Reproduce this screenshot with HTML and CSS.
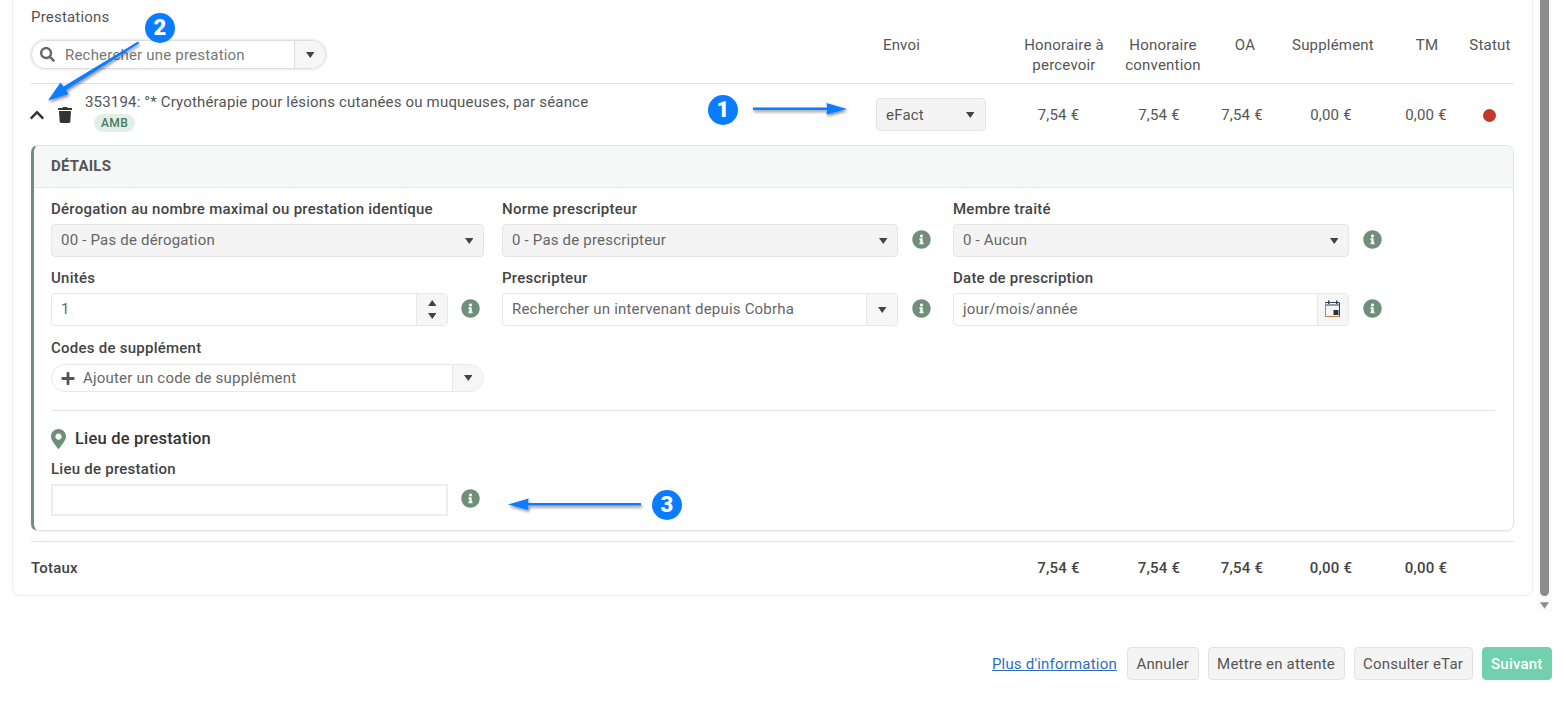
FILE: index.html
```html
<!DOCTYPE html>
<html lang="fr">
<head>
  <meta charset="UTF-8">
  <meta name="viewport" content="width=device-width, initial-scale=1.0">
  <title>Prestations</title>
  <link rel="stylesheet" href="styles.css">
</head>
<body>
  <svg class="icon-defs" width="0" height="0">
    <symbol id="i-search" viewBox="0 0 512 512"><path d="M505 442.7L405.3 343c-4.5-4.5-10.6-7-17-7H372c27.6-35.3 44-79.7 44-128C416 93.1 322.9 0 208 0S0 93.1 0 208s93.1 208 208 208c48.3 0 92.7-16.4 128-44v16.3c0 6.4 2.5 12.5 7 17l99.7 99.7c9.4 9.4 24.6 9.4 33.9 0l28.3-28.3c9.4-9.4 9.4-24.6.1-34zM208 336c-70.7 0-128-57.2-128-128 0-70.7 57.2-128 128-128 70.7 0 128 57.2 128 128 0 70.7-57.2 128-128 128z"/></symbol>
    <symbol id="i-trash" viewBox="0 0 448 512"><path d="M432 32H312l-9.4-18.7A24 24 0 0 0 281.1 0H166.8a23.72 23.72 0 0 0-21.4 13.3L136 32H16A16 16 0 0 0 0 48v32a16 16 0 0 0 16 16h416a16 16 0 0 0 16-16V48a16 16 0 0 0-16-16zM53.2 467a48 48 0 0 0 47.9 45h245.8a48 48 0 0 0 47.9-45L416 128H32z"/></symbol>
    <symbol id="i-chevron" viewBox="0 0 448 512"><path d="M240.971 130.524l194.343 194.343c9.373 9.373 9.373 24.569 0 33.941l-22.667 22.667c-9.357 9.357-24.522 9.375-33.901.04L224 227.495 69.255 381.516c-9.379 9.335-24.544 9.317-33.901-.04l-22.667-22.667c-9.373-9.373-9.373-24.569 0-33.941L207.03 130.525c9.372-9.373 24.568-9.373 33.941-.001z"/></symbol>
    <symbol id="i-info" viewBox="0 0 512 512"><path d="M256 8C119.043 8 8 119.083 8 256c0 136.997 111.043 248 248 248s248-111.003 248-248C504 119.083 392.957 8 256 8zm0 110c23.196 0 42 18.804 42 42s-18.804 42-42 42-42-18.804-42-42 18.804-42 42-42zm56 254c0 6.627-5.373 12-12 12h-88c-6.627 0-12-5.373-12-12v-24c0-6.627 5.373-12 12-12h12v-64h-12c-6.627 0-12-5.373-12-12v-24c0-6.627 5.373-12 12-12h64c6.627 0 12 5.373 12 12v100h12c6.627 0 12 5.373 12 12v24z"/></symbol>
    <symbol id="i-plus" viewBox="0 0 448 512"><path d="M416 208H272V64c0-17.67-14.33-32-32-32h-32c-17.67 0-32 14.33-32 32v144H32c-17.67 0-32 14.33-32 32v32c0 17.67 14.33 32 32 32h144v144c0 17.67 14.33 32 32 32h32c17.67 0 32-14.33 32-32V304h144c17.67 0 32-14.33 32-32v-32c0-17.67-14.33-32-32-32z"/></symbol>
    <symbol id="i-marker" viewBox="0 0 384 512"><path d="M172.268 501.67C26.97 291.031 0 269.413 0 192 0 85.961 85.961 0 192 0s192 85.961 192 192c0 77.413-26.97 99.031-172.268 309.67-9.535 13.774-29.93 13.773-39.464 0zM192 272c44.183 0 80-35.817 80-80s-35.817-80-80-80-80 35.817-80 80 35.817 80 80 80z"/></symbol>
    <symbol id="i-caret" viewBox="0 0 10 7"><path d="M0 0h10L5 7z"/></symbol>
    <symbol id="i-caret-up" viewBox="0 0 10 7"><path d="M0 7h10L5 0z"/></symbol>
  </svg>

  <div class="scroll-area">
    <main class="card">
      <div class="table-head">
        <div class="search-col">
          <div class="col-title">Prestations</div>
          <div class="search-box">
            <svg class="search-icon"><use href="#i-search"/></svg>
            <span class="search-text">Rechercher une prestation</span>
            <span class="search-arrow"><svg class="caret"><use href="#i-caret"/></svg></span>
          </div>
        </div>
        <div class="th th-envoi">Envoi</div>
        <div class="th">Honoraire à percevoir</div>
        <div class="th">Honoraire convention</div>
        <div class="th">OA</div>
        <div class="th">Supplément</div>
        <div class="th">TM</div>
        <div class="th">Statut</div>
      </div>

      <div class="table-row">
        <div class="presta">
          <svg class="chevron"><use href="#i-chevron"/></svg>
          <svg class="trash"><use href="#i-trash"/></svg>
          <div class="presta-text">
            <div>353194: °* Cryothérapie pour lésions cutanées ou muqueuses, par séance</div>
            <span class="badge">AMB</span>
          </div>
        </div>
        <div class="envoi-select"><span>eFact</span><svg class="caret"><use href="#i-caret"/></svg></div>
        <div class="td">7,54 €</div>
        <div class="td">7,54 €</div>
        <div class="td">7,54 €</div>
        <div class="td">0,00 €</div>
        <div class="td">0,00 €</div>
        <div class="td"><span class="status-dot"></span></div>
      </div>

      <section class="details">
        <h2 class="details-head">DÉTAILS</h2>
        <div class="details-body">
          <div class="form-grid">
            <div class="field">
              <label>Dérogation au nombre maximal ou prestation identique</label>
              <div class="control-line">
                <div class="control select"><span>00 - Pas de dérogation</span><svg class="caret"><use href="#i-caret"/></svg></div>
              </div>
            </div>
            <div class="field">
              <label>Norme prescripteur</label>
              <div class="control-line">
                <div class="control select"><span>0 - Pas de prescripteur</span><svg class="caret"><use href="#i-caret"/></svg></div>
                <svg class="info"><use href="#i-info"/></svg>
              </div>
            </div>
            <div class="field">
              <label>Membre traité</label>
              <div class="control-line">
                <div class="control select"><span>0 - Aucun</span><svg class="caret"><use href="#i-caret"/></svg></div>
                <svg class="info"><use href="#i-info"/></svg>
              </div>
            </div>

            <div class="field field-units">
              <label>Unités</label>
              <div class="control-line">
                <div class="control input">
                  <span class="grow">1</span>
                  <span class="addon spin">
                    <svg class="caret"><use href="#i-caret-up"/></svg>
                    <svg class="caret"><use href="#i-caret"/></svg>
                  </span>
                </div>
                <svg class="info"><use href="#i-info"/></svg>
              </div>
            </div>
            <div class="field">
              <label>Prescripteur</label>
              <div class="control-line">
                <div class="control input">
                  <span class="grow">Rechercher un intervenant depuis Cobrha</span>
                  <span class="addon"><svg class="caret"><use href="#i-caret"/></svg></span>
                </div>
                <svg class="info"><use href="#i-info"/></svg>
              </div>
            </div>
            <div class="field">
              <label>Date de prescription</label>
              <div class="control-line">
                <div class="control input">
                  <span class="grow">jour/mois/année</span>
                  <span class="addon">
                    <svg class="calendar" viewBox="0 0 16 17">
                      <path d="M.5 2.500h14v14h-14z" fill="none" stroke="#34425c"/>
                      <path d="M.5 5h14" stroke="#34425c"/>
                      <path d="M3 .5h1.500v3.500H3zM11 .5h1.500v3.500H11z" fill="#34425c"/>
                      <path d="M8.500 10h5v5h-5z" fill="#26304a"/>
                      <path d="M.5 3v13.500h14" fill="none" stroke="#c8803c"/>
                    </svg>
                  </span>
                </div>
                <svg class="info"><use href="#i-info"/></svg>
              </div>
            </div>

            <div class="field field-codes">
              <label>Codes de supplément</label>
              <div class="control-line">
                <div class="control pill">
                  <svg class="plus"><use href="#i-plus"/></svg>
                  <span class="grow">Ajouter un code de supplément</span>
                  <span class="addon"><svg class="caret"><use href="#i-caret"/></svg></span>
                </div>
              </div>
            </div>
          </div>

          <hr class="sep">

          <h3 class="place-title"><svg class="marker"><use href="#i-marker"/></svg>Lieu de prestation</h3>
          <div class="field">
            <label>Lieu de prestation</label>
            <div class="control-line place-line">
              <div class="place-input"></div>
              <svg class="info"><use href="#i-info"/></svg>
            </div>
          </div>
        </div>
      </section>

      <div class="table-row totals">
        <div class="totals-label">Totaux</div>
        <div></div>
        <div class="td">7,54 €</div>
        <div class="td">7,54 €</div>
        <div class="td">7,54 €</div>
        <div class="td">0,00 €</div>
        <div class="td">0,00 €</div>
        <div></div>
      </div>
    </main>

    <div class="scrollbar">
      <div class="thumb"></div>
      <svg class="scroll-down"><use href="#i-caret"/></svg>
    </div>
  </div>

  <footer class="actions">
    <a class="more-link" href="#">Plus d'information</a>
    <button class="btn">Annuler</button>
    <button class="btn">Mettre en attente</button>
    <button class="btn">Consulter eTar</button>
    <button class="btn btn-next">Suivant</button>
  </footer>

  <!-- annotations posees sur la capture -->
  <svg class="arrows" width="1566" height="702">
    <defs>
      <filter id="arrow-shadow" x="-20%" y="-50%" width="140%" height="220%">
        <feDropShadow dx="1" dy="2" stdDeviation="1.5" flood-color="#000" flood-opacity=".45"/>
      </filter>
    </defs>
    <g fill="#0a7cff" filter="url(#arrow-shadow)">
      <path d="M753 107.500h74l-.5-4.500L847 109l-20.500 5.500.5-4.500h-74z"/>
      <path d="M138 41.500l1.200 1.800L66 90l2.500 4L48 100.500 60.500 82.500l3 4z"/>
      <path d="M641 503h-113l.5-4.500L508 504.500l20.500 5.500-.5-4.500h113z"/>
    </g>
  </svg>
  <span class="step step-1">1</span>
  <span class="step step-2">2</span>
  <span class="step step-3">3</span>
</body>
</html>
```

FILE: styles.css
```css
* {
  box-sizing: border-box;
}
html, body {
  height: 100%;
}
body {
  margin: 0;
  position: relative;
  overflow: hidden;
  background-color: #fff;
  font-family: Roboto, "Liberation Sans", sans-serif;
  font-size: 15px;
  letter-spacing: 0.2px;
  color: #555;
}
.icon-defs {
  position: absolute;
}
.scroll-area {
  display: flex;
  align-items: flex-start;
  height: 612px;
  padding-left: 12px;
}
.card {
  width: 1521px;
  height: 596px;
  padding: 0 18px 0 18px;
  border: 1px solid #ececec;
  border-top: none;
  border-radius: 0 0 8px 8px;
}

/* tableau */
.table-head {
  display: grid;
  grid-template-columns: 835px 148px 100px 98px 66px 110px 78px 48px;
  height: 84px;
  border-bottom: 1px solid #e2e2e2;
}
.col-title {
  padding-top: 9px;
  line-height: 17px;
  color: #555;
}
.search-box {
  display: flex;
  align-items: center;
  width: 295px;
  height: 29px;
  margin-top: 14px;
  border: 1px solid #ddd;
  border-radius: 15px;
  box-shadow: 0 0 0 1.500px #efefef;
}
.search-icon {
  width: 15px;
  height: 15px;
  margin-left: 8px;
  fill: #666;
}
.search-text {
  flex: 1;
  margin-left: 10px;
  color: #777;
}
.search-arrow {
  display: flex;
  align-items: center;
  justify-content: center;
  width: 31px;
  height: 100%;
  border-left: 1px solid #ddd;
  background-color: #f6f6f6;
  border-radius: 0 15px 15px 0;
}
.caret {
  width: 8.500px;
  height: 6px;
  fill: #444;
}
.th {
  padding-top: 35px;
  line-height: 20px;
  text-align: center;
}
.th-envoi {
  padding-right: 77px;
}
.table-row {
  display: grid;
  grid-template-columns: 835px 142px 101px 100px 66px 112px 78px 48px;
  align-items: center;
  height: 61px;
}
.presta {
  display: flex;
  align-items: center;
}
.chevron {
  width: 14px;
  height: 16px;
  margin-left: -1px;
  fill: #333;
}
.trash {
  width: 14px;
  height: 16px;
  margin-left: 14px;
  fill: #333;
}
.presta-text {
  margin-left: 13px;
  margin-top: -6px;
  line-height: 20px;
  letter-spacing: 0.18px;
}
.badge {
  display: block;
  width: fit-content;
  margin-top: 2px;
  margin-left: 9px;
  padding: 0 7px;
  border-radius: 9px;
  background-color: #e2efe7;
  color: #4b7a5d;
  font-size: 12px;
  font-weight: 500;
  letter-spacing: 0.4px;
  line-height: 18px;
}
.envoi-select {
  display: flex;
  align-items: center;
  justify-content: space-between;
  width: 110px;
  height: 33px;
  margin-left: 10px;
  padding: 0 11px 0 9px;
  border: 1px solid #e4e4e4;
  border-radius: 4px;
  background-color: #f4f4f4;
}
.td {
  text-align: center;
}
.status-dot {
  display: inline-block;
  width: 13px;
  height: 13px;
  border-radius: 50%;
  background-color: #c0392b;
  vertical-align: middle;
}

/* detail */
.details {
  height: 386px;
  border: 1px solid #e4e4e4;
  border-left: 3px solid #6f8f7a;
  border-radius: 7px;
  box-shadow: 0 1px 2px rgba(0, 0, 0, 0.06);
}
.details-head {
  height: 42px;
  margin: 0;
  padding-left: 17px;
  border-bottom: 1px solid #e8e8e8;
  border-radius: 6px 6px 0 0;
  background-color: #f6f8f7;
  font-size: 15px;
  font-weight: 700;
  line-height: 41px;
  color: #555;
}
.details-body {
  padding: 12px 18px 0 17px;
}
.form-grid {
  display: grid;
  grid-template-columns: repeat(3, 433px);
  column-gap: 18px;
}
.field label {
  display: block;
  line-height: 18px;
  color: #444;
  font-weight: 500;
  letter-spacing: 0.25px;
}
.control-line {
  display: flex;
  align-items: center;
  gap: 14px;
  margin-top: 6px;
  margin-bottom: 12px;
}
.field-units .control-line {
  gap: 13px;
}
.control {
  display: flex;
  align-items: center;
  flex: 1;
  height: 33px;
  border: 1px solid #e8e8e8;
  border-radius: 4px;
  color: #666;
}
.control > span:first-child:not(.grow) {
  margin-top: -1px;
}
.select {
  justify-content: space-between;
  padding: 0 10px 0 9px;
  border-color: #e4e4e4;
  background-color: #f4f4f4;
}
.input {
  padding-left: 9px;
}
.input .grow {
  margin-top: -2px;
}
.grow {
  flex: 1;
}
.addon {
  display: flex;
  align-items: center;
  justify-content: center;
  width: 31px;
  height: 100%;
  border-left: 1px solid #e8e8e8;
  border-radius: 0 3px 3px 0;
  background-color: #f6f6f6;
}
.spin {
  flex-direction: column;
  gap: 7px;
}
.info {
  width: 19px;
  height: 19px;
  margin-top: -2px;
  margin-right: 4px;
  fill: #6f8f7a;
  flex-shrink: 0;
}
.field-codes {
  margin-top: 1px;
}
.field-codes .control-line {
  margin-top: 7px;
}
.pill {
  height: 28px;
  border-radius: 14px;
}
.pill .addon {
  border-radius: 0 14px 14px 0;
}
.plus {
  width: 14px;
  height: 15px;
  margin: 0 8px 0 9px;
  fill: #555;
}
.calendar {
  width: 16px;
  height: 17px;
  margin-top: -3px;
}
.sep {
  margin: 6px 0 0;
  border: none;
  border-top: 1px solid #e2e2e2;
}
.place-title {
  display: flex;
  align-items: center;
  margin: 18px 0 11px;
  font-size: 16.500px;
  font-weight: 500;
  line-height: 20px;
  color: #333;
}
.marker {
  width: 15px;
  height: 20px;
  margin-right: 9px;
  fill: #6f8f7a;
}
.place-line {
  margin-top: 6px;
  margin-bottom: 0;
  gap: 13px;
}
.place-input {
  width: 397px;
  height: 32px;
  border: 2px solid #eee;
}
.place-line .info {
  margin-top: -4px;
}

/* totaux */
.totals {
  height: 55px;
  padding-bottom: 2px;
  margin-top: 10px;
  border-top: 1px solid #e2e2e2;
  color: #444;
}
.totals .td,
.totals-label {
  font-weight: 500;
}

/* scrollbar */
.scrollbar {
  display: flex;
  flex-direction: column;
  align-items: center;
  width: 15px;
  height: 612px;
  margin-left: 4px;
  background-color: #fafafa;
}
.thumb {
  width: 9px;
  height: 596px;
  border-radius: 0 0 5px 5px;
  background-color: #8c8c8c;
}
.scroll-down {
  width: 9px;
  height: 7px;
  margin-top: 6px;
  fill: #8c8c8c;
}

/* boutons */
.actions {
  display: flex;
  align-items: center;
  justify-content: flex-end;
  gap: 9px;
  height: 33px;
  margin-top: 35px;
  padding-right: 14px;
}
.more-link {
  margin-right: 1px;
  color: #2f6dbb;
}
.btn {
  height: 33px;
  padding: 0 8.500px;
  border: 1px solid #e2e2e2;
  border-radius: 4px;
  background-color: #f4f4f4;
  color: #555;
  font: inherit;
  letter-spacing: inherit;
}
.btn-next {
  border-color: #71d0ae;
  background-color: #71d0ae;
  color: #fff;
  font-weight: 500;
}

/* annotations */
.arrows {
  position: absolute;
  left: 0;
  top: 0;
  pointer-events: none;
}
.step {
  position: absolute;
  width: 30px;
  height: 30px;
  border-radius: 50%;
  background-color: #0a7cff;
  color: #fff;
  font-size: 22px;
  font-weight: 900;
  line-height: 30px;
  text-align: center;
}
.step-1 {
  left: 708px;
  top: 95px;
}
.step-2 {
  left: 145px;
  top: 13px;
}
.step-3 {
  left: 652px;
  top: 490px;
}
```
